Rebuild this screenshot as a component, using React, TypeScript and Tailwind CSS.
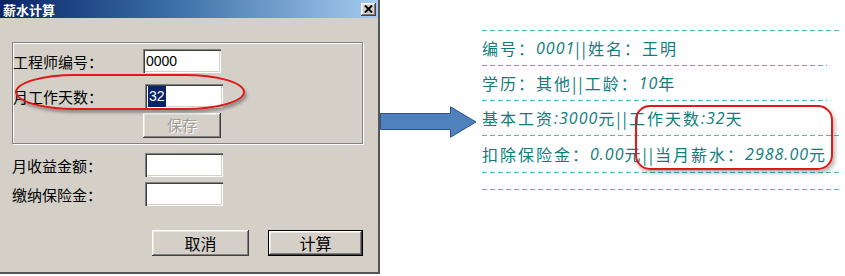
const cjk = { fontFamily: '"Noto Sans CJK SC", "Liberation Sans", sans-serif' }

const raised =
  'shadow-[inset_-1px_-1px_#404040,inset_1px_1px_#ffffff,inset_-2px_-2px_#808080,inset_2px_2px_#e8e6e1]'
const sunken =
  'shadow-[inset_1px_1px_#808080,inset_2px_2px_#404040,inset_-1px_-1px_#ffffff,inset_-2px_-2px_#d4d0c8]'

function Field({ label, labelW, top, children }: { label: string; labelW: string; top: string; children?: React.ReactNode }) {
  return (
    <div className={`flex items-center ${top}`}>
      <span className={`${labelW} text-[15px] leading-none text-black`}>{label}</span>
      <div
        className={`flex h-[24px] w-[78px] items-center bg-white pl-[3px] text-[14px] ${sunken}`}
        style={{ fontFamily: '"Liberation Sans", sans-serif' }}
      >
        {children}
      </div>
    </div>
  )
}

function Dash({ w }: { w: string }) {
  return (
    <div
      className={`h-px ${w} bg-[linear-gradient(to_right,#45b8b8_5px,transparent_5px)] bg-[length:8px_1px] bg-repeat-x`}
    />
  )
}

function Num({ children }: { children: React.ReactNode }) {
  return (
    <span className="text-[16px] font-normal italic tracking-[1px]" style={{ fontFamily: '"Open Sans", sans-serif' }}>
      {children}
    </span>
  )
}

function Line({ children, h = 'h-[34px]' }: { children: React.ReactNode; h?: string }) {
  return (
    <div className={`flex ${h} items-center whitespace-nowrap text-[16px] tracking-[2px] text-[#107c7c]`}>
      {children}
    </div>
  )
}

export default function App() {
  return (
    <div className="flex h-[276px] w-[845px] overflow-hidden bg-white" style={cjk}>
      {/* dialog */}
      <div className="relative flex h-[274px] w-[380px] shrink-0 flex-col border-r-2 border-b-2 border-[#555555] bg-[#d4d0c8]">
        <div className="flex h-[18px] items-center justify-between bg-[linear-gradient(to_right,#0a246a,#3a6ea5_45%,#a6caf0)] pl-[3px] pr-[2px]">
          <span className="text-[13px] font-bold leading-none text-white">薪水计算</span>
          <div className={`flex h-[13px] w-[15px] items-center justify-center bg-[#d4d0c8] ${raised}`}>
            <svg width="9" height="8" viewBox="0 0 9 8">
              <path d="M1 0.5 L8 7.5 M8 0.5 L1 7.5" stroke="#000" strokeWidth="2" />
            </svg>
          </div>
        </div>

        <div className="flex flex-col pl-[12px] pt-[24px]">
          <div className="flex h-[102px] w-[351px] flex-col border border-[#808080] shadow-[inset_1px_1px_#ffffff,1px_1px_#ffffff]">
            <Field label="工程师编号：" labelW="w-[130px]" top="mt-[6px]">
              0000
            </Field>
            <Field label="月工作天数：" labelW="w-[132px]" top="mt-[11px]">
              <span className="bg-[#0a246a] px-px text-white">32</span>
            </Field>
            <div
              className={`ml-[130px] mt-[5px] flex h-[25px] w-[78px] items-center justify-center bg-[#d4d0c8] text-[15px] text-[#a09d96] [text-shadow:1px_1px_#ffffff] ${raised}`}
            >
              保存
            </div>
          </div>

          <Field label="月收益金额：" labelW="w-[133px]" top="mt-[9px]" />
          <Field label="缴纳保险金：" labelW="w-[133px]" top="mt-[5px]" />

          <div className="mt-[24px] flex">
            <div className={`ml-[140px] flex h-[26px] w-[97px] items-center justify-center text-[16px] text-black ${raised}`}>
              取消
            </div>
            <div className="ml-[19px] flex h-[26px] w-[95px] border border-black">
              <div className={`flex flex-1 items-center justify-center text-[16px] text-black ${raised}`}>计算</div>
            </div>
          </div>
        </div>

        <div className="absolute left-[15px] top-[74px] h-[36px] w-[230px] rounded-[60px/18px] border-2 border-[#e01818] shadow-[2px_3px_3px_rgba(0,0,0,0.3)]" />
      </div>

      {/* arrow */}
      <div className="w-[102px] shrink-0 pt-[106px]">
        <svg width="98" height="33" viewBox="0 0 98 33">
          <path d="M0.5 7.5 H70.5 V0.8 L96 16 L70.5 31.2 V23.5 H0.5 Z" fill="#4f81bd" stroke="#2f528f" strokeWidth="1" />
        </svg>
      </div>

      {/* result text */}
      <div className="relative flex flex-col pt-[30px]">
        <Dash w="w-[360px]" />
        <Line>
          编号：<Num>0001</Num>||姓名：王明
        </Line>
        <Dash w="w-[345px]" />
        <Line>
          学历：其他||工龄：<Num>10</Num>年
        </Line>
        <Dash w="w-[345px]" />
        <Line>
          基本工资<Num>:3000</Num>元||工作天数<Num>:32</Num>天
        </Line>
        <Dash w="w-[360px]" />
        <Line h="h-[36px]">
          扣除保险金：<Num>0.00</Num>元||当月薪水：<Num>2988.00</Num>元
        </Line>
        <Dash w="w-[360px]" />
        <div className="h-[16px]" />
        <Dash w="w-[360px]" />

        <div className="absolute left-[153px] top-[105px] h-[65px] w-[198px] rounded-[15px] border-2 border-[#e01818] shadow-[2px_3px_4px_rgba(0,0,0,0.3)]" />
      </div>
    </div>
  )
}
